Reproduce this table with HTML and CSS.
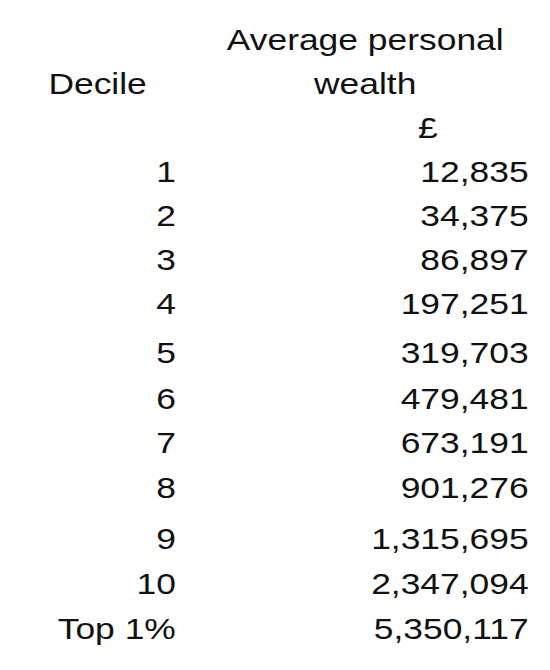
FILE: index.html
```html
<!DOCTYPE html>
<html>
<head>
<meta charset="utf-8">
<link rel="stylesheet" href="styles.css">
</head>
<body>
<div class="page">
  <div class="table">
    <div class="head-title">Average personal wealth</div>
    <div class="head-decile">Decile</div>
    <div class="head-unit">£</div>

    <div class="dec first">1</div><div class="val">12,835</div>
    <div class="dec">2</div><div class="val">34,375</div>
    <div class="dec">3</div><div class="val">86,897</div>
    <div class="dec">4</div><div class="val">197,251</div>
    <div class="dec">5</div><div class="val">319,703</div>
    <div class="dec">6</div><div class="val">479,481</div>
    <div class="dec">7</div><div class="val">673,191</div>
    <div class="dec">8</div><div class="val">901,276</div>
    <div class="dec">9</div><div class="val">1,315,695</div>
    <div class="dec">10</div><div class="val">2,347,094</div>
    <div class="dec">Top 1%</div><div class="val">5,350,117</div>
  </div>
</div>
</body>
</html>
```

FILE: styles.css
```css
html, body {
  margin: 0;
  padding: 0;
  background: #ffffff;
}

.page {
  width: 466px;
  padding-top: 18px;
  transform: scaleX(1.18);
  transform-origin: 0 0;
  font-family: "Liberation Sans", Arial, sans-serif;
  font-size: 30px;
  line-height: 44px;
  color: #111111;
}

.table {
  display: grid;
  grid-template-columns: 149px 299px;
  grid-template-rows: 44px 44px 44px 44px 44px 44px 49px 46px 44px 45px 51px 45px 45px 44px;
}

.head-title {
  grid-column: 2;
  grid-row: 1 / 3;
  text-align: center;
  padding-left: 22px;
}

.head-decile {
  grid-column: 1;
  grid-row: 2;
  padding-left: 41px;
  white-space: nowrap;
}

.head-unit {
  grid-column: 2;
  grid-row: 3;
  text-align: right;
  padding-right: 77px;
}

.dec {
  grid-column: 1;
  text-align: right;
  white-space: nowrap;
}

.dec.first {
  grid-row-start: 4;
}

.val {
  grid-column: 2;
  text-align: right;
}
```
